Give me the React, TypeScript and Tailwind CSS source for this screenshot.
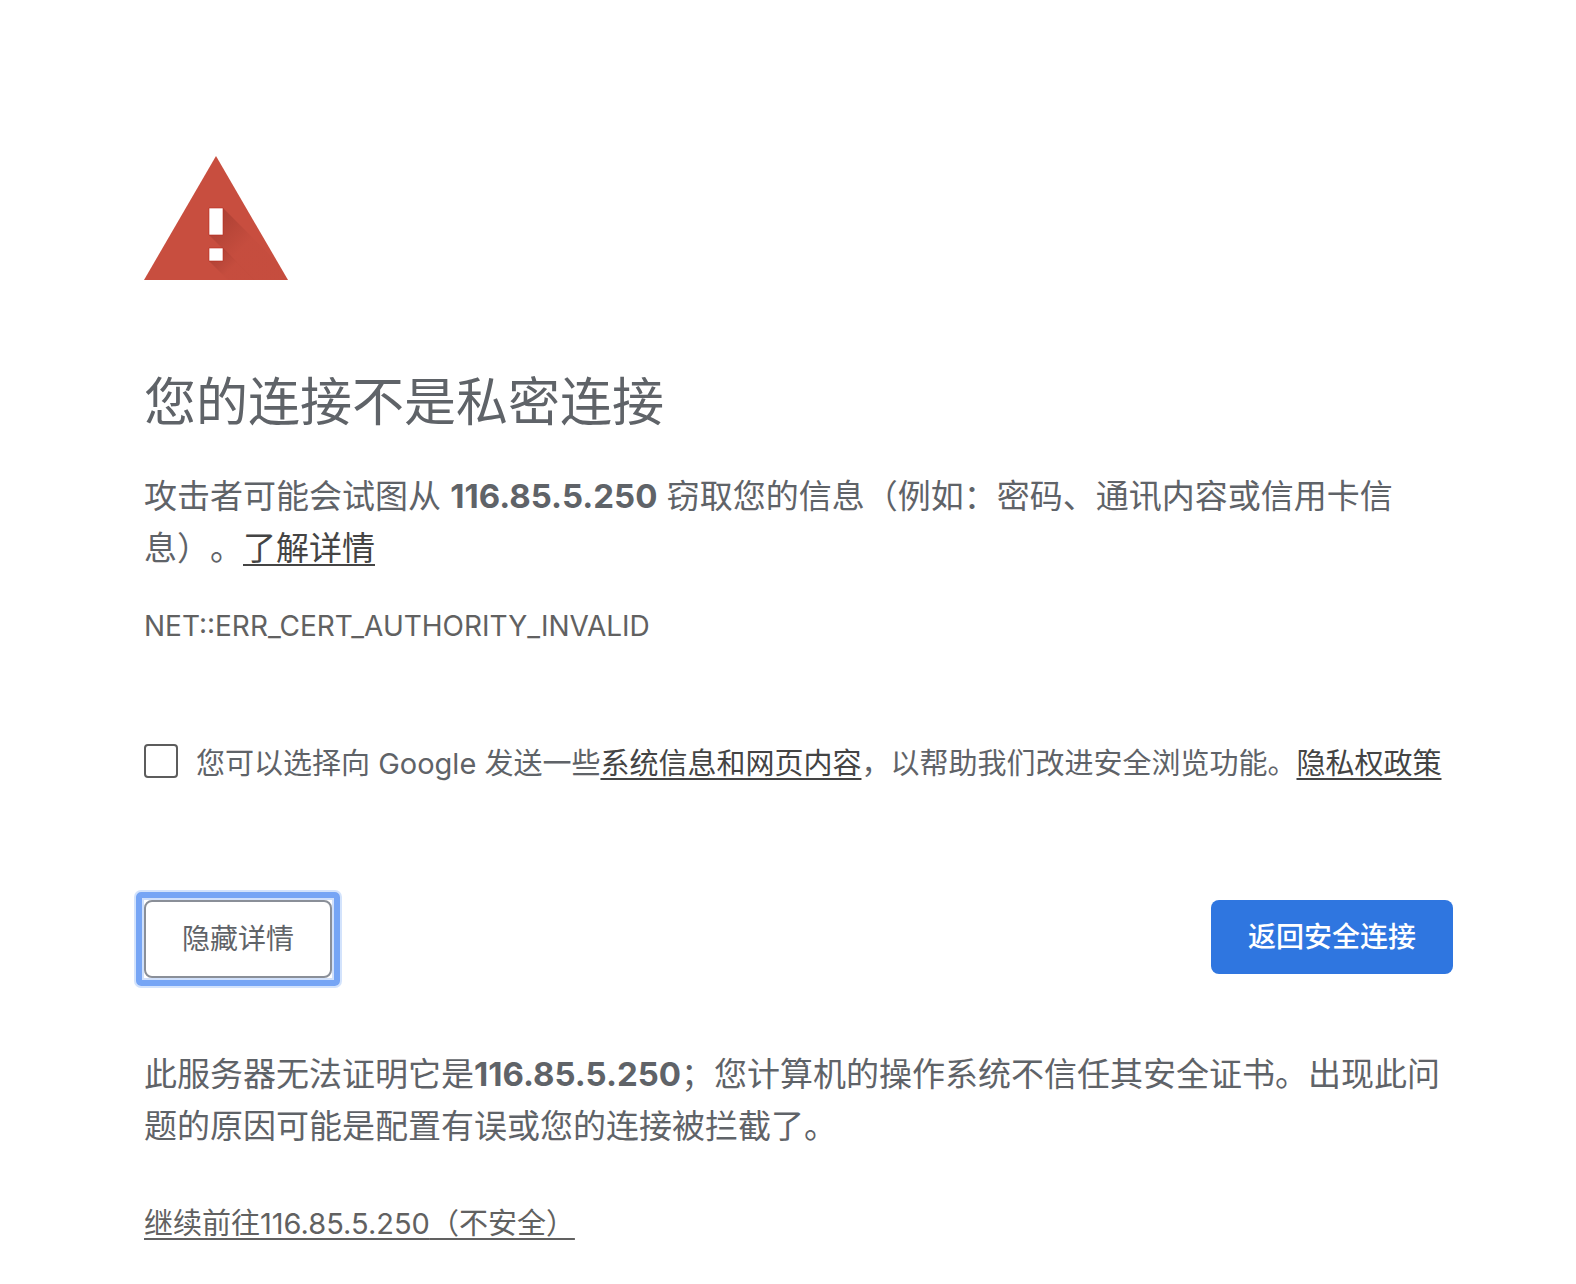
import { useState } from "react";

const HOST = "116.85.5.250";

export default function App() {
  const [open, setOpen] = useState(true);
  const [report, setReport] = useState(false);

  return (
    <main
      lang="zh-CN"
      className="min-h-screen bg-white pt-[156px] pr-[123px] pb-8 pl-[144px] font-['Inter','Noto_Sans_CJK_SC',sans-serif] text-[#5f6368] [text-spacing-trim:space-all]"
    >
      <WarningIcon />

      <h1 className="mt-[84px] text-[52px] leading-[78px] font-normal">您的连接不是私密连接</h1>

      <p className="mt-7 text-[33px] leading-[52px]">
        攻击者可能会试图从 <strong className="font-bold">{HOST}</strong>{" "}
        窃取您的信息（例如：密码、通讯内容或信用卡信息）。
        <TextLink>了解详情</TextLink>
      </p>

      <div className="mt-8 text-[28px] leading-10 text-[#616161]">NET::ERR_CERT_AUTHORITY_INVALID</div>

      <div className="mt-[98px] flex items-start gap-[18px]">
        <input
          id="report"
          type="checkbox"
          checked={report}
          onChange={(e) => setReport(e.target.checked)}
          className="h-[34px] w-[34px] shrink-0 appearance-none rounded-[4px] border-2 border-[#5c5c5c] bg-white checked:bg-[#2f76e0]"
        />
        <label htmlFor="report" className="text-[29px] leading-10">
          您可以选择向 Google 发送一些<TextLink>系统信息和网页内容</TextLink>
          ，以帮助我们改进安全浏览功能。<TextLink>隐私权政策</TextLink>
        </label>
      </div>

      <div className="mt-[116px] flex items-start justify-between">
        {/* focus ring has tighter corners than the button, so it is its own box */}
        <button
          type="button"
          onClick={() => setOpen(!open)}
          className="relative rounded-[8px] border-2 border-[#8a8f98] bg-white px-9 py-[17px] text-[28px] leading-10 before:pointer-events-none before:absolute before:-inset-[10px] before:rounded-[5px] before:border-[6px] before:border-[#76a5f5] before:shadow-[0_0_0_2px_#d3e3fc,inset_0_0_0_2px_#d0e0fb]"
        >
          {open ? "隐藏详情" : "高级"}
        </button>
        <button
          type="button"
          className="rounded-[8px] bg-[#2f76e0] px-[37px] py-[17px] text-[28px] leading-10 font-medium text-white"
        >
          返回安全连接
        </button>
      </div>

      {open && (
        <section className="mt-[70px]">
          <p className="text-[33px] leading-[52px]">
            此服务器无法证明它是<strong className="font-bold">{HOST}</strong>
            ；您计算机的操作系统不信任其安全证书。出现此问题的原因可能是配置有误或您的连接被拦截了。
          </p>
          <p className="mt-[52px] text-[29px] leading-10">
            <a href="#" className="text-[#616161] underline decoration-2 underline-offset-4">
              继续前往{HOST}（不安全）
            </a>
          </p>
        </section>
      )}
    </main>
  );
}

function TextLink({ children }: { children: string }) {
  return (
    <a href="#" className="text-[#444444] underline decoration-2 underline-offset-4">
      {children}
    </a>
  );
}

function WarningIcon() {
  return (
    <svg width="144" height="124" viewBox="0 0 144 124" aria-hidden="true">
      <defs>
        <linearGradient id="bar" gradientUnits="userSpaceOnUse" x1="70" y1="64" x2="98" y2="92">
          <stop offset="0" stopColor="#7f2a22" stopOpacity=".36" />
          <stop offset="1" stopColor="#7f2a22" stopOpacity=".03" />
        </linearGradient>
        <linearGradient id="dot" gradientUnits="userSpaceOnUse" x1="70" y1="96" x2="87" y2="113">
          <stop offset="0" stopColor="#7f2a22" stopOpacity=".36" />
          <stop offset="1" stopColor="#7f2a22" stopOpacity=".03" />
        </linearGradient>
        <clipPath id="tri">
          <path d="M72 0 144 124H0Z" />
        </clipPath>
      </defs>
      <path d="M72 0 144 124H0Z" fill="#c84e3f" />
      <g clipPath="url(#tri)">
        <path d="M79 52 151 124H110L65 79Z" fill="url(#bar)" />
        <path d="M79 92 111 124H84L65 105Z" fill="url(#dot)" />
      </g>
      <path d="M65 52H79V79H65ZM65 92H79V105H65Z" fill="#fff" stroke="#b8281c" strokeWidth=".6" />
    </svg>
  );
}
